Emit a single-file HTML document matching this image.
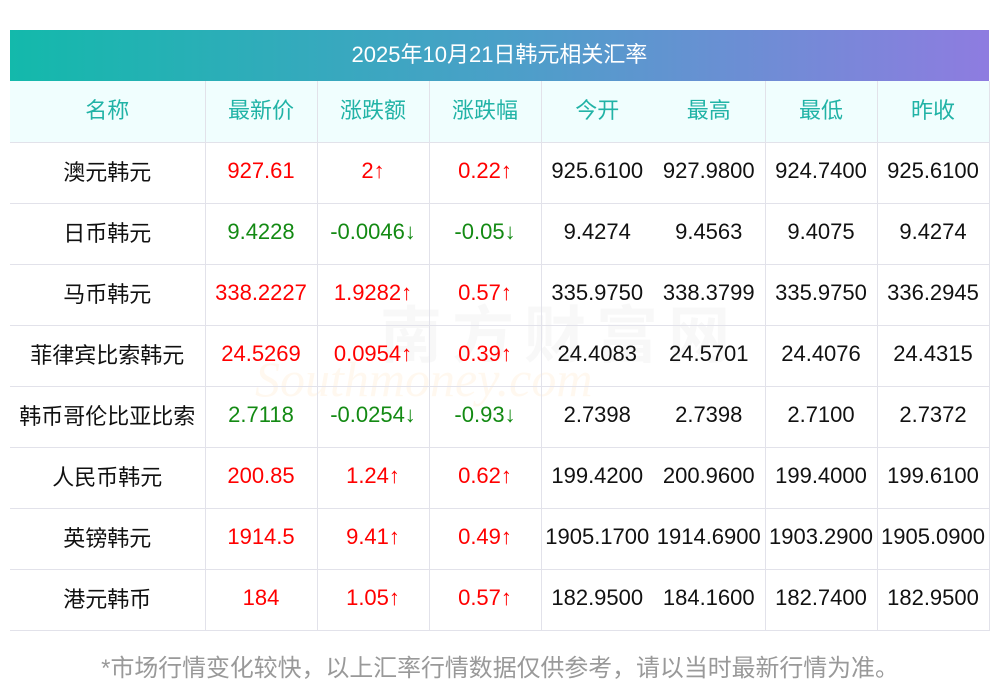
<!DOCTYPE html>
<html><head><meta charset="utf-8"><style>
body{margin:0;background:#fff;width:1000px;height:697px;overflow:hidden;font-family:"Liberation Sans","Noto Sans CJK SC",sans-serif;position:relative}
.t{position:absolute;left:10px;top:30px;width:979px}
.title{height:51px;background:linear-gradient(90deg,#13b9ab,#4aa0c8 50%,#8e7ce0);color:#fff;font-size:22px;text-align:center;line-height:49px}
table{border-collapse:collapse;width:979px;table-layout:fixed}
td{height:61px;border-bottom:1px solid #e2e2ea;border-right:1px solid #e2e2ea;text-align:center;font-size:22px;padding:0 0 4px 0;box-sizing:border-box;color:#111;white-space:nowrap;overflow:visible}
tr.h td{background:#f0fefe;color:#21b3a6}
td.nb{border-right:none}
.r{color:#f00}.g{color:#138a13}
.foot{position:absolute;top:648px;left:0;width:1000px;text-align:center;color:#999;font-size:23.9px}
.wm{position:absolute;left:380px;top:285px;font-size:62px;color:rgba(200,200,200,.12);letter-spacing:10px;font-weight:bold}
.wm2{position:absolute;left:255px;top:350px;font-size:50px;color:rgba(255,200,120,.12);font-style:italic;font-family:"Liberation Serif",serif}
</style></head><body>
<div class="wm">南方财富网</div>
<div class="wm2">Southmoney.com</div>
<div class="t">
<div class="title">2025年10月21日韩元相关汇率</div>
<table>
<colgroup><col style="width:195px"><col style="width:112px"><col style="width:112px"><col style="width:112px"><col style="width:112px"><col style="width:112px"><col style="width:112px"><col style="width:112px"></colgroup>
<tr class="h"><td>名称</td><td>最新价</td><td>涨跌额</td><td>涨跌幅</td><td class="nb">今开</td><td>最高</td><td>最低</td><td>昨收</td></tr>
<tr><td>澳元韩元</td><td class="r">927.61</td><td class="r">2↑</td><td class="r">0.22↑</td><td class="nb">925.6100</td><td>927.9800</td><td>924.7400</td><td>925.6100</td></tr>
<tr><td>日币韩元</td><td class="g">9.4228</td><td class="g">-0.0046↓</td><td class="g">-0.05↓</td><td class="nb">9.4274</td><td>9.4563</td><td>9.4075</td><td>9.4274</td></tr>
<tr><td>马币韩元</td><td class="r">338.2227</td><td class="r">1.9282↑</td><td class="r">0.57↑</td><td class="nb">335.9750</td><td>338.3799</td><td>335.9750</td><td>336.2945</td></tr>
<tr><td>菲律宾比索韩元</td><td class="r">24.5269</td><td class="r">0.0954↑</td><td class="r">0.39↑</td><td class="nb">24.4083</td><td>24.5701</td><td>24.4076</td><td>24.4315</td></tr>
<tr><td>韩币哥伦比亚比索</td><td class="g">2.7118</td><td class="g">-0.0254↓</td><td class="g">-0.93↓</td><td class="nb">2.7398</td><td>2.7398</td><td>2.7100</td><td>2.7372</td></tr>
<tr><td>人民币韩元</td><td class="r">200.85</td><td class="r">1.24↑</td><td class="r">0.62↑</td><td class="nb">199.4200</td><td>200.9600</td><td>199.4000</td><td>199.6100</td></tr>
<tr><td>英镑韩元</td><td class="r">1914.5</td><td class="r">9.41↑</td><td class="r">0.49↑</td><td class="nb">1905.1700</td><td>1914.6900</td><td>1903.2900</td><td>1905.0900</td></tr>
<tr><td>港元韩币</td><td class="r">184</td><td class="r">1.05↑</td><td class="r">0.57↑</td><td class="nb">182.9500</td><td>184.1600</td><td>182.7400</td><td>182.9500</td></tr>
</table>
</div>
<div class="foot">*市场行情变化较快，以上汇率行情数据仅供参考，请以当时最新行情为准。</div>
</body></html>
